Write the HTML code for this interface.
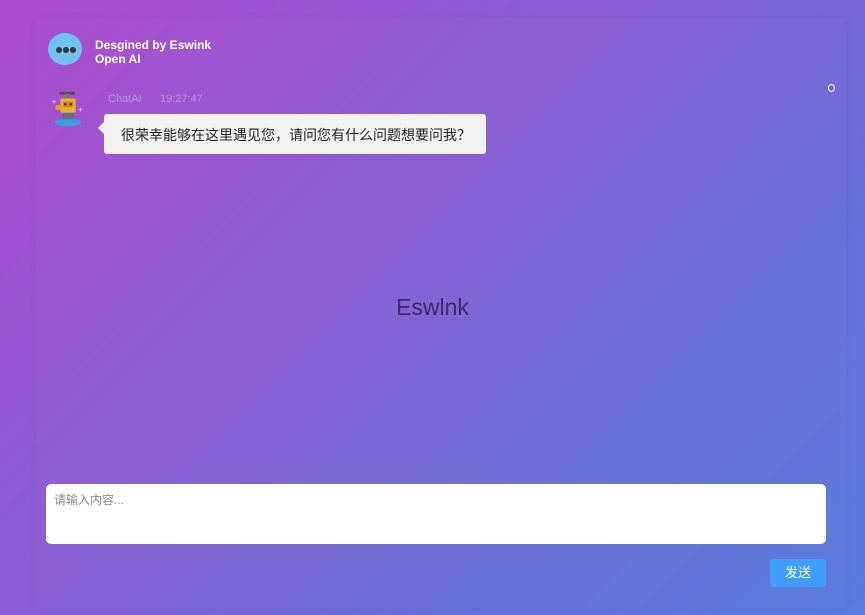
<!DOCTYPE html>
<html><head><meta charset="utf-8"><style>
*{margin:0;padding:0;box-sizing:border-box}
body{width:865px;height:615px;overflow:hidden;font-family:"Liberation Sans","Noto Sans CJK SC",sans-serif;
background:linear-gradient(135deg,#ad49cf 0%,#8a5fd3 40%,#6a6fd6 70%,#5a7cdb 100%);position:relative}
.inner{position:absolute;left:36px;top:18px;width:810px;height:590px;background:rgba(255,255,255,0.012);box-shadow:0 0 10px rgba(0,0,0,0.03)}
.logo{position:absolute;left:48px;top:33px;width:34px;height:32px;border-radius:50%;background:#6fc2ee}
.logo i{position:absolute;top:14px;width:6px;height:6px;border-radius:50%;background:#2c3a4a}
.title{position:absolute;left:95px;top:38px;color:#fff;font-size:12px;font-weight:bold;line-height:14px}
.meta{position:absolute;left:108px;top:93px;color:rgba(200,200,210,0.55);font-size:11px}
.bubble{position:absolute;left:104px;top:114px;width:382px;height:40px;background:#f2f2f2;border-radius:3px;font-size:14px;color:#222;padding:11px 0 0 17px}
.bubble:before{content:"";position:absolute;left:-6px;top:8px;border:6px solid transparent;border-left:0;border-right-color:#f2f2f2}
.center{position:absolute;left:0;width:865px;top:294px;text-align:center;font-size:23px;color:#3a2a66}
.input{position:absolute;left:46px;top:484px;width:780px;height:60px;background:#fff;border-radius:5px;font-size:12px;color:#888;padding:7px 8px}
.btn{position:absolute;left:770px;top:559px;width:56px;height:28px;background:#409eff;border-radius:3px;color:#fff;font-size:13px;text-align:center;line-height:28px}
.circ{position:absolute;left:828px;top:84px;width:7px;height:8px;border:1.5px solid #fff;border-radius:50%}
</style></head><body>
<div class="inner"></div>
<div class="logo"><i style="left:8px"></i><i style="left:15px"></i><i style="left:22px"></i></div>
<div class="title">Desgined by Eswink<br>Open AI</div>
<svg style="position:absolute;left:50px;top:89px" width="36" height="40" viewBox="0 0 36 42">
<rect x="9" y="3" width="16" height="3" fill="#555"/><rect x="15" y="5" width="4" height="5" fill="#777"/>
<ellipse cx="18" cy="35" rx="14" ry="4" fill="#3ba0e0"/>
<rect x="10" y="10" width="16" height="15" rx="2" fill="#f0b030"/>
<rect x="13" y="13" width="10" height="6" fill="#d08a10"/>
<circle cx="15" cy="16" r="1.3" fill="#333"/><circle cx="21" cy="16" r="1.3" fill="#333"/>
<rect x="5" y="17" width="6" height="5" fill="#e0a020"/>
<rect x="12" y="25" width="12" height="7" fill="#6a6a8a"/>
<text x="1" y="16" font-size="8" fill="#fff">+</text><text x="29" y="24" font-size="8" fill="#fff">+</text>
</svg>
<div class="meta">ChatAI &nbsp;&nbsp;&nbsp;&nbsp; 19:27:47</div>
<div class="bubble">很荣幸能够在这里遇见您，请问您有什么问题想要问我？</div>
<div class="circ"></div>
<div class="center">Eswlnk</div>
<div class="input">请输入内容...</div>
<div class="btn">发送</div>
</body></html>
